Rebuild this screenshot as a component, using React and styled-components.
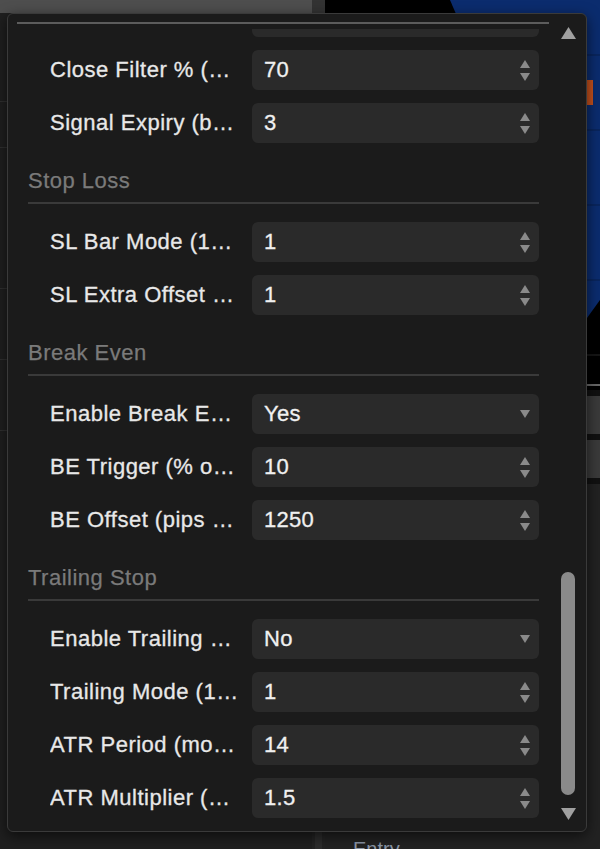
import React from "react"
import styled, { createGlobalStyle } from "styled-components"

const GlobalStyle = createGlobalStyle`
  html, body {
    margin: 0;
    padding: 0;
    background: #1e1e1e;
  }
  body {
    font-family: "Liberation Sans", Arial, sans-serif;
  }
`

const sections = [
  {
    title: null,
    rows: [
      { label: "Close Confirmation", value: "Close", kind: "select" },
      { label: "Close Filter % (body)", value: "70", kind: "number" },
      { label: "Signal Expiry (bars)", value: "3", kind: "number" },
    ],
  },
  {
    title: "Stop Loss",
    rows: [
      { label: "SL Bar Mode (1=signal, 2=prev)", value: "1", kind: "number" },
      { label: "SL Extra Offset (pips)", value: "1", kind: "number" },
    ],
  },
  {
    title: "Break Even",
    rows: [
      { label: "Enable Break Even", value: "Yes", kind: "select" },
      { label: "BE Trigger (% of TP)", value: "10", kind: "number" },
      { label: "BE Offset (pips from entry)", value: "1250", kind: "number" },
    ],
  },
  {
    title: "Trailing Stop",
    rows: [
      { label: "Enable Trailing Stop", value: "No", kind: "select" },
      { label: "Trailing Mode (1=ATR, 2=pips)", value: "1", kind: "number" },
      { label: "ATR Period (mode 1)", value: "14", kind: "number" },
      { label: "ATR Multiplier (mode 1)", value: "1.5", kind: "number" },
    ],
  },
]

/* ---------- backdrop (the chart window behind the popup) ---------- */

const Page = styled.div`
  position: relative;
  width: 600px;
  height: 849px;
  overflow: hidden;
  background: #1e1e1e;
`

const Backdrop = styled.div`
  display: grid;
  grid-template-columns: 312px 13px 1fr;
  height: 100%;
`

const SidePane = styled.div`
  display: flex;
  flex-direction: column;
  background: #1f1f1f;
`

const SideHeader = styled.div`
  height: 13px;
  background: #4e4e4e;
`

const SideLine = styled.div`
  height: ${(p) => p.$gap}px;
  border-bottom: 1px solid #303030;
`

const Splitter = styled.div`
  display: flex;
  flex-direction: column;
  background: #232323;

  &::before {
    content: "";
    height: 13px;
    background: #333;
  }
  &::after {
    content: "";
    flex: 1;
    margin: 0 3px;
    background: #2c2c2c;
  }
`

const RightPane = styled.div`
  display: flex;
  flex-direction: column;
`

const Chart = styled.div`
  height: 390px;
  background: #000;

  svg {
    display: block;
  }
`

const ChartButtons = styled.div`
  display: flex;
  flex-direction: column;
  gap: 6px;
  padding: 6px 0;
  background: #111;
`

const ChartButton = styled.div`
  height: 38px;
  background: #3a3a3a;
`

const TradePanel = styled.div`
  flex: 1;
  display: flex;
  flex-direction: column;
  justify-content: flex-end;
  padding: 0 0 0 28px;
  background: #222;
`

const TradeLabel = styled.span`
  font-size: 20px;
  color: #8b97a8;
  line-height: 24px;
  margin-bottom: -12px;
`

/* ---------- popup ---------- */

const Popup = styled.div`
  position: absolute;
  left: 7px;
  top: 13px;
  width: 580px;
  height: 819px;
  box-sizing: border-box;
  display: flex;
  background: #1b1b1b;
  border: 1px solid #3a3a3a;
  border-radius: 6px;
  box-shadow: 0 4px 14px rgba(0, 0, 0, 0.6);
`

const Main = styled.div`
  flex: 1;
  display: flex;
  flex-direction: column;
  padding: 8px 0 8px 9px;
  min-width: 0;
`

const TopRule = styled.div`
  height: 2px;
  background: #5c5c5c;
`

const Viewport = styled.div`
  flex: 1;
  margin-top: 5px;
  overflow: hidden;
`

const List = styled.div`
  display: flex;
  flex-direction: column;
  padding: 0 10px 0 11px;
  margin-top: ${(p) => -p.$scroll}px;
`

const Section = styled.section`
  display: flex;
  flex-direction: column;
  gap: 13px;
`

const SectionTitle = styled.h3`
  margin: 26px 0 18px;
  padding: 0 0 9px;
  font-size: 22px;
  letter-spacing: 0.5px;
  line-height: 24px;
  font-weight: normal;
  color: #7a7a7a;
  -webkit-text-stroke: 0.25px currentColor;
  border-bottom: 2px solid #3a3a3a;
`

const Row = styled.div`
  display: flex;
  align-items: center;
  padding-left: 22px;
`

const Label = styled.span`
  width: 190px;
  margin-right: 12px;
  flex: none;
  font-size: 22px;
  letter-spacing: 0.5px;
  color: #e8e8e8;
  -webkit-text-stroke: 0.3px currentColor;
  white-space: nowrap;
  overflow: hidden;
  text-overflow: ellipsis;
`

const Field = styled.div`
  flex: 1;
  height: 40px;
  display: flex;
  align-items: center;
  justify-content: space-between;
  padding: 0 9px 0 12px;
  background: #2a2a2a;
  border-radius: 6px;
  font-size: 22px;
  letter-spacing: 0.3px;
  color: #f0f0f0;

  & > span {
    -webkit-text-stroke: 0.3px currentColor;
  }
`

const Arrows = styled.div`
  display: flex;
  flex-direction: column;
  gap: 5px;
  color: #8a8a8a;

  svg {
    display: block;
  }
`

const Triangle = ({ down, size = 10 }) => (
  <svg width={size} height={size * 0.8} viewBox="0 0 10 8">
    <path d={down ? "M0 0H10L5 8Z" : "M5 0L10 8H0Z"} fill="currentColor" />
  </svg>
)

const Scrollbar = styled.div`
  width: 24px;
  margin-right: 6px;
  margin-left: 7px;
  display: flex;
  flex-direction: column;
  align-items: center;
  padding: 13px 0 11px;
  color: #a0a0a0;
`

const Track = styled.div`
  position: relative;
  flex: 1;
  width: 100%;
`

const Thumb = styled.div`
  position: absolute;
  left: 5px;
  right: 5px;
  border-radius: 7px;
  background: #8a8a8a;
`

const Setting = ({ row }) => (
  <Row>
    <Label>{row.label}</Label>
    <Field>
      <span>{row.value}</span>
      <Arrows>
        {row.kind === "number" && <Triangle />}
        <Triangle down />
      </Arrows>
    </Field>
  </Row>
)

const scroll = { offset: 32, top: 533, height: 223 }

export default function App() {
  return (
    <>
      <GlobalStyle />
      <Page>
        <Backdrop>
          <SidePane>
            <SideHeader />
            <SideLine $gap={88} />
            <SideLine $gap={45} />
            <SideLine $gap={140} />
            <SideLine $gap={70} />
            <SideLine $gap={70} />
          </SidePane>
          <Splitter />
          <RightPane>
            <Chart>
              <svg width="275" height="390" viewBox="0 0 275 390">
                <path d="M125 0H275V300L262 318Z" fill="#0b2c6e" />
                {[55, 130, 205, 280].map((y) => (
                  <line key={y} x1="125" x2="275" y1={y} y2={y} stroke="#081f4d" />
                ))}
                <line x1="262" x2="275" y1="355" y2="355" stroke="#2a2a2a" />
                <line x1="262" x2="275" y1="385" y2="385" stroke="#d0d0d0" />
                <rect x="262" y="80" width="6" height="25" fill="#c4501d" />
              </svg>
            </Chart>
            <ChartButtons>
              <ChartButton />
              <ChartButton />
            </ChartButtons>
            <TradePanel>
              <TradeLabel>Entry</TradeLabel>
            </TradePanel>
          </RightPane>
        </Backdrop>

        <Popup>
          <Main>
            <TopRule />
            <Viewport>
              <List $scroll={scroll.offset}>
                {sections.map((section, i) => (
                  <React.Fragment key={i}>
                    {section.title && <SectionTitle>{section.title}</SectionTitle>}
                    <Section>
                      {section.rows.map((row) => (
                        <Setting key={row.label} row={row} />
                      ))}
                    </Section>
                  </React.Fragment>
                ))}
              </List>
            </Viewport>
          </Main>
          <Scrollbar>
            <Triangle size={15} />
            <Track>
              <Thumb style={{ top: scroll.top, height: scroll.height }} />
            </Track>
            <Triangle down size={15} />
          </Scrollbar>
        </Popup>
      </Page>
    </>
  )
}
